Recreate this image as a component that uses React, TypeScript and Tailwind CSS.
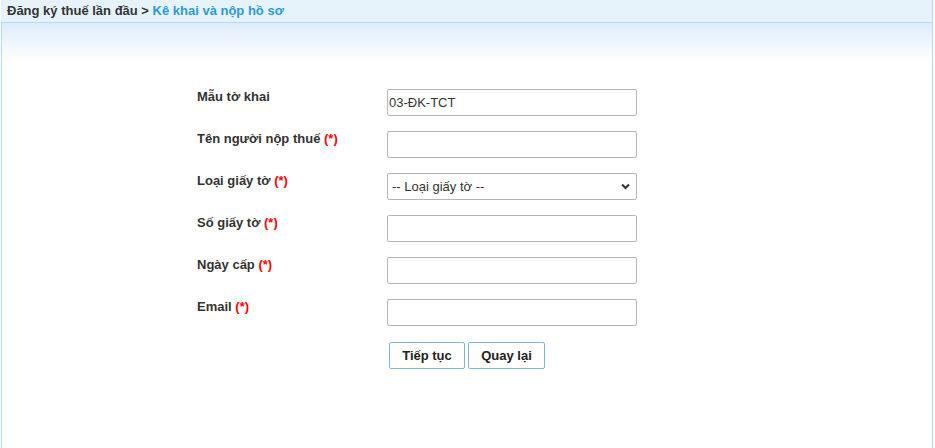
import { useState } from "react";

interface Field {
  label: string;
  required: boolean;
  value?: string;
  kind: "text" | "select";
}

const fields: Field[] = [
  { label: "Mẫu tờ khai", required: false, value: "03-ĐK-TCT", kind: "text" },
  { label: "Tên người nộp thuế", required: true, kind: "text" },
  { label: "Loại giấy tờ", required: true, kind: "select" },
  { label: "Số giấy tờ", required: true, kind: "text" },
  { label: "Ngày cấp", required: true, kind: "text" },
  { label: "Email", required: true, kind: "text" },
];

export default function App() {
  const [docType, setDocType] = useState("");

  return (
    <div className="h-screen w-[935px] bg-white font-['Liberation_Sans',Arial,sans-serif] text-[13px] text-[#333]">
      <div className="ml-px flex h-full w-[932px] flex-col border-r border-[#b3dbf7]">
        {/* breadcrumb */}
        <div className="h-[23px] border-b border-[#b3dbf7] bg-[#e6f3fb] pl-[6px] pt-[3px] font-bold leading-[15px]">
          <span className="text-[#333]">Đăng ký thuế lần đầu &gt; </span>
          <span className="text-[#2a9ad8]">Kê khai và nộp hồ sơ</span>
        </div>

        <div className="flex-1 border-l border-[#b3dbf7]">
          <div className="h-[40px] bg-gradient-to-b from-[#deedfa] to-white" />

          <div className="pl-[195px] pt-[26px]">
            <div className="flex flex-col gap-[15px]">
              {fields.map((field, i) => (
                <div key={i} className="flex items-start">
                  <div className="w-[190px] font-bold leading-[15px]">
                    {field.label}
                    {field.required && <span className="text-[#f00]"> (*)</span>}
                  </div>
                  {field.kind === "text" ? (
                    <input
                      type="text"
                      defaultValue={field.value ?? ""}
                      className="h-[27px] w-[250px] rounded-[2px] border border-[#b5b5b5] bg-white px-[1px] text-[13px] text-[#333] outline-none"
                    />
                  ) : (
                    <div className="relative">
                      <select
                        value={docType}
                        onChange={(e) => setDocType(e.target.value)}
                        className="h-[27px] w-[250px] appearance-none rounded-[2px] border border-[#b5b5b5] bg-white pl-[4px] text-[13px] text-[#333] outline-none"
                      >
                        <option value="">-- Loại giấy tờ --</option>
                        <option value="cccd">Căn cước công dân</option>
                        <option value="cmnd">Chứng minh nhân dân</option>
                        <option value="hc">Hộ chiếu</option>
                      </select>
                      <svg
                        className="pointer-events-none absolute right-[7px] top-[10px]"
                        width="9"
                        height="7"
                        viewBox="0 0 9 7"
                      >
                        <path d="M1 1.5 L4.5 5 L8 1.5" fill="none" stroke="#333" strokeWidth="2" />
                      </svg>
                    </div>
                  )}
                </div>
              ))}
            </div>

            <div className="ml-[192px] mt-[16px] flex gap-[3px]">
              <button className="h-[27px] w-[76px] rounded-[2px] border border-[#79b6ef] bg-white font-bold text-[#222]">
                Tiếp tục
              </button>
              <button className="h-[27px] w-[77px] rounded-[2px] border border-[#79b6ef] bg-white font-bold text-[#222]">
                Quay lại
              </button>
            </div>
          </div>
        </div>
      </div>
    </div>
  );
}
